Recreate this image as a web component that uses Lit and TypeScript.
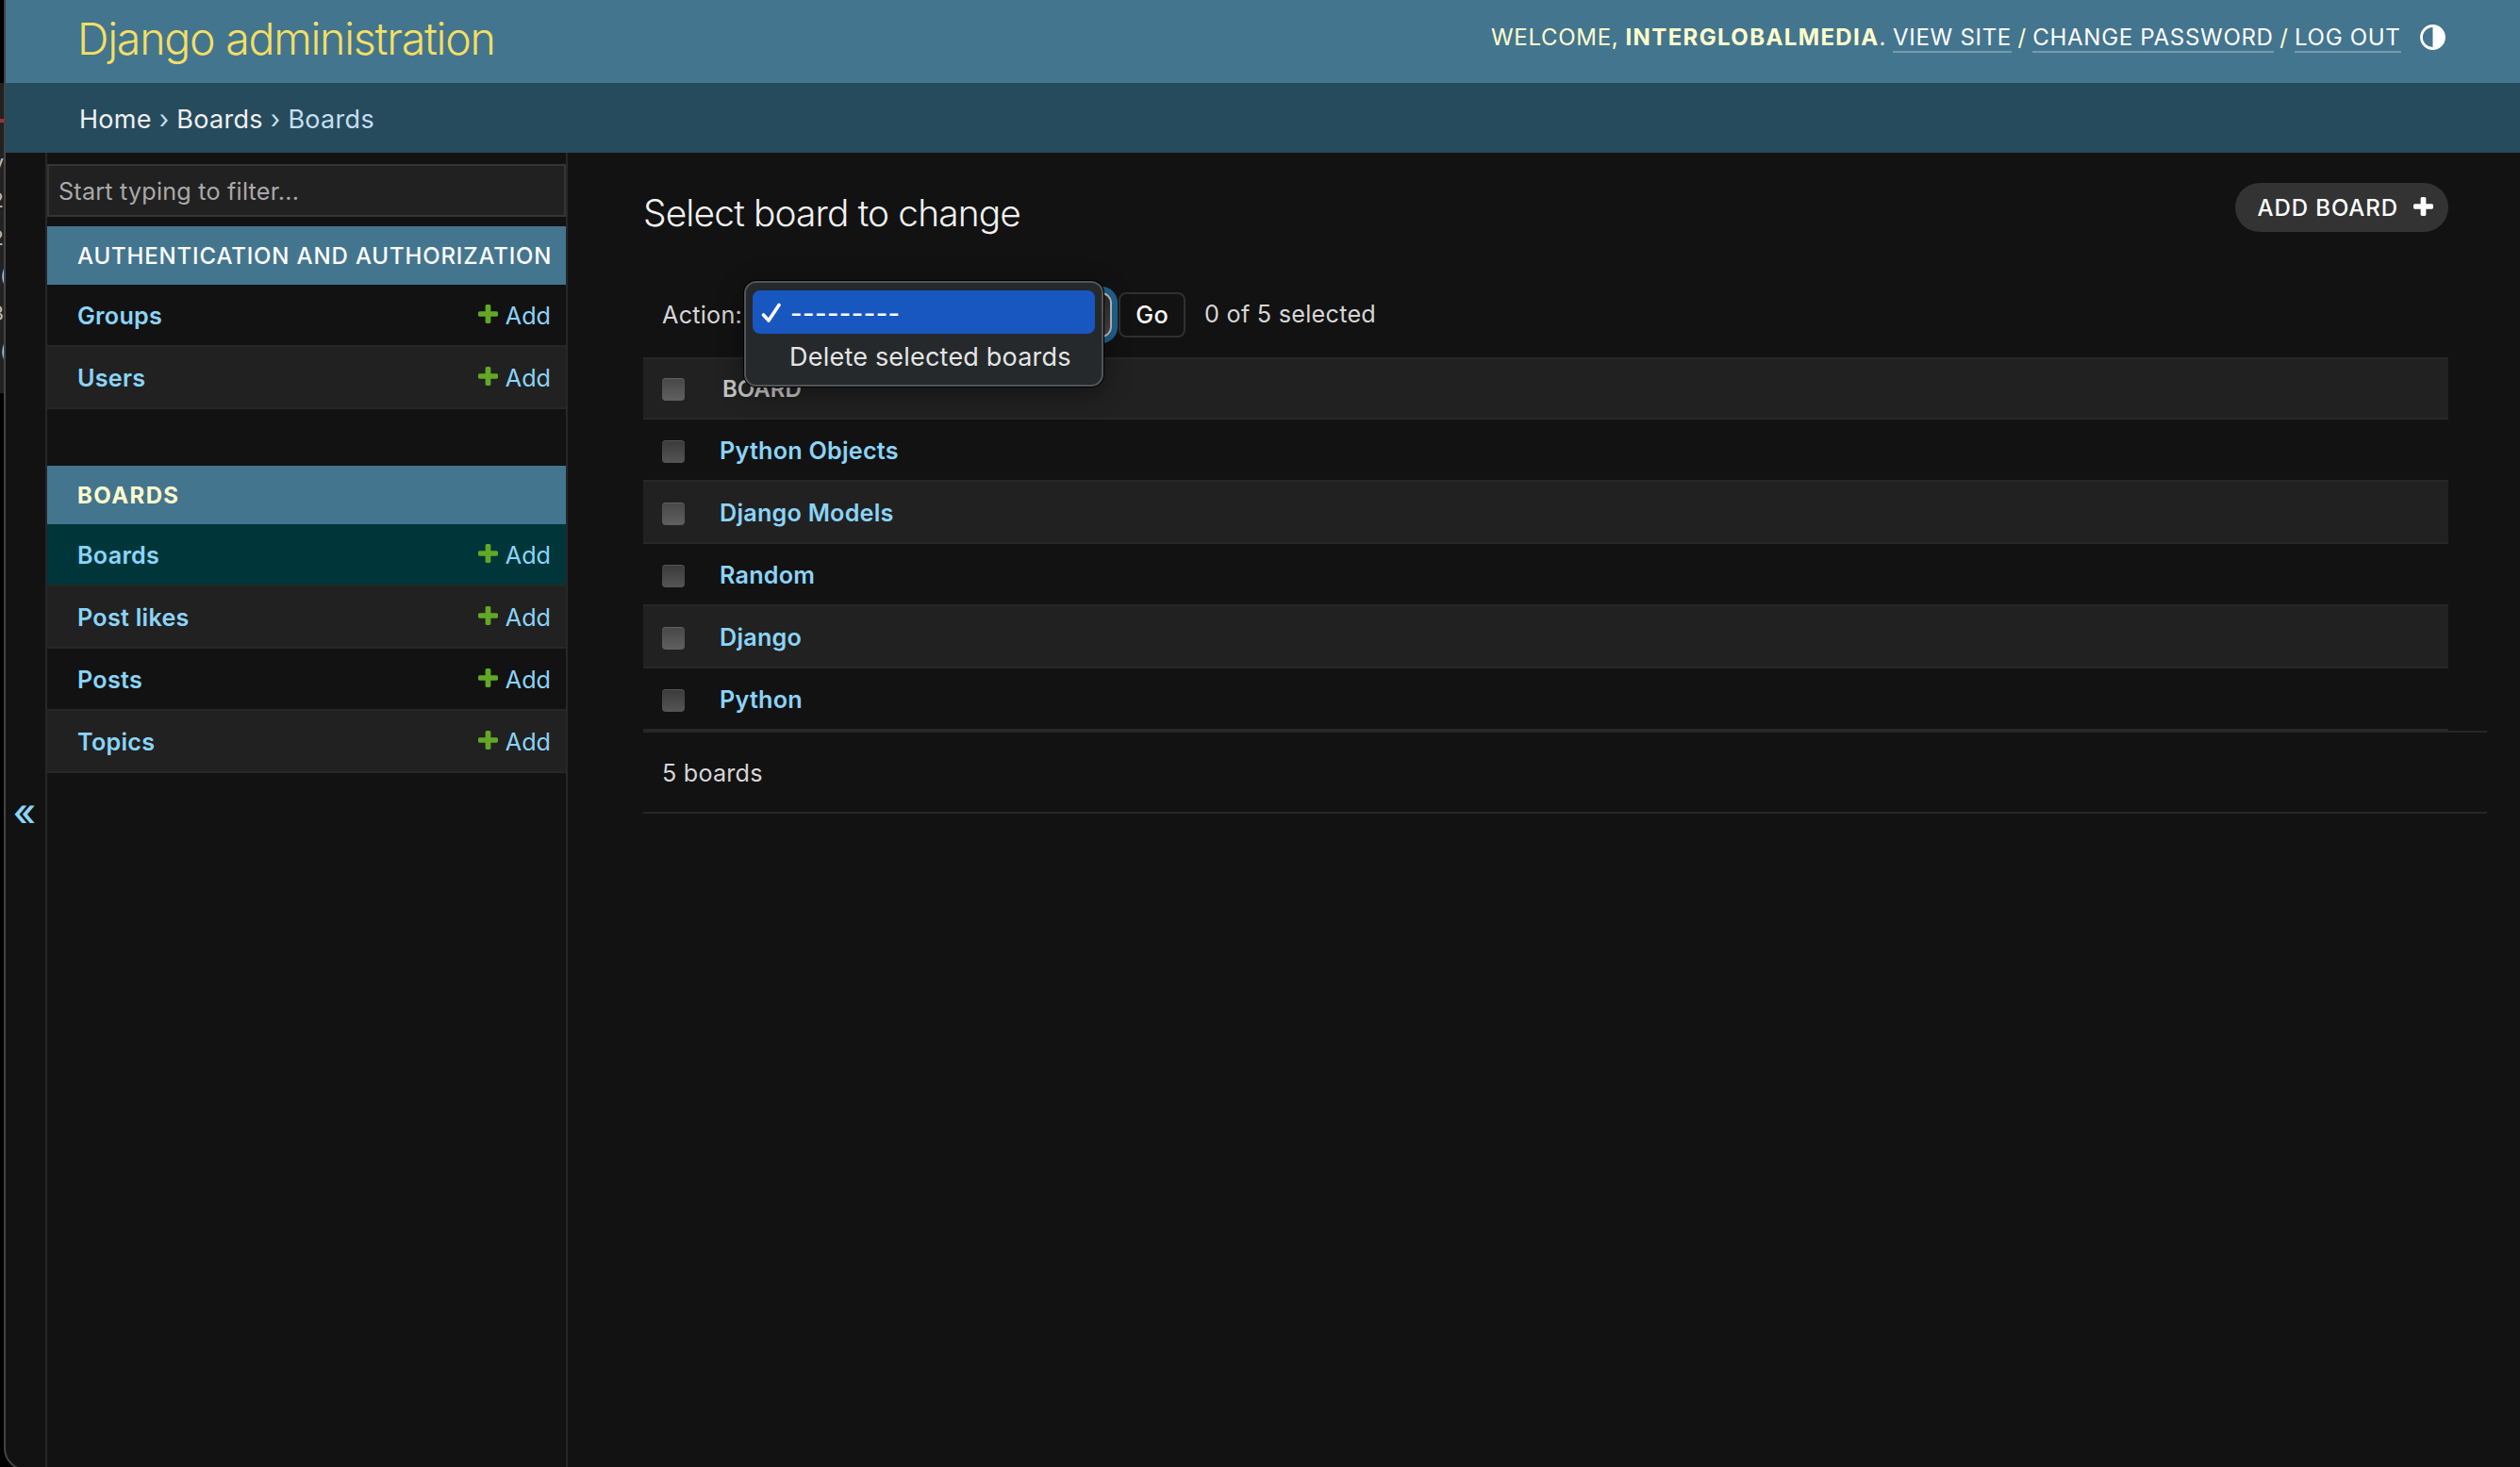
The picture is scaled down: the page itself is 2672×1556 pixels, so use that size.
import { LitElement, html, css, svg } from 'lit';
import { customElement, property } from 'lit/decorators.js'
import { classMap } from 'lit/directives/class-map.js';

interface Model {
  name: string;
  current?: boolean;
}

interface App {
  label: string;
  current?: boolean;
  models: Model[];
}

const APPS: App[] = [
  {
    label: 'Authentication and Authorization',
    models: [{ name: 'Groups' }, { name: 'Users' }],
  },
  {
    label: 'Boards',
    current: true,
    models: [{ name: 'Boards', current: true }, { name: 'Post likes' }, { name: 'Posts' }, { name: 'Topics' }],
  },
];

const BOARDS = ['Python Objects', 'Django Models', 'Random', 'Django', 'Python'];

const plus = svg`<path d="M1600 796v192q0 40-28 68t-68 28h-416v416q0 40-28 68t-68 28H800q-40 0-68-28t-28-68v-416H288q-40 0-68-28t-28-68V796q0-40 28-68t68-28h416V284q0-40 28-68t68-28h192q40 0 68 28t28 68v416h416q40 0 68 28t28 68z"/>`;

/**
 * Top bar with the site name and the user links.
 */
@customElement('admin-header')
export class AdminHeader extends LitElement {

  @property() user = '';

  static override styles = css`
    :host {
      display: flex;
      justify-content: space-between;
      box-sizing: border-box;
      height: 88px;
      padding: 0 79px 0 76px;
      background: #44758f;
      color: #ffc;
    }

    h1 {
      margin: 0;
      font-size: 46.5px;
      font-weight: 330;
      line-height: 82px;
      letter-spacing: -1.25px;
      color: #f4df62;
    }

    .tools {
      display: flex;
      font-size: 24px;
      line-height: 80px;
      letter-spacing: 0.7px;
      text-transform: uppercase;
      white-space: pre;
    }

    .tools strong {
      margin-left: 7px;
      font-weight: 700;
      letter-spacing: 1.37px;
    }

    .tools a {
      color: #fff;
      border-bottom: 2px solid rgba(255, 255, 255, 0.27);
    }

    .tools .first {
      margin-left: 7px;
    }

    .tools .sep {
      margin: 0 6.5px;
    }

    svg {
      width: 27px;
      height: 27px;
      margin: 26px 0 0 20.5px;
    }
  `;

  override render() {
    return html`
      <h1>Django administration</h1>
      <div class="tools">
        <span>Welcome,</span><strong>${this.user}</strong><span>.</span>
        <span class="first"><a>View site</a></span><span class="sep">/</span><span><a>Change password</a></span><span class="sep">/</span><span><a>Log out</a></span>
        <svg viewBox="0 0 27 27">
          <circle cx="13.5" cy="13.5" r="12" fill="none" stroke="#fff" stroke-width="2.8" />
          <path d="M13.5 1.5a12 12 0 0 1 0 24z" fill="#fff" />
        </svg>
      </div>`;
  }
}

/**
 * Left navigation: filter box and one block for each app.
 */
@customElement('admin-sidebar')
export class AdminSidebar extends LitElement {

  static override styles = css`
    :host {
      display: block;
      box-sizing: border-box;
      width: 554px;
      padding-top: 12px;
      border: solid #272727;
      border-width: 0 2px;
      font-size: 25.2px;
    }

    .filter {
      box-sizing: border-box;
      height: 56px;
      margin-bottom: 10px;
      padding: 0 10px;
      border: 2px solid #353535;
      background: #212121;
      color: #a9a9a9;
      line-height: 54px;
      letter-spacing: 0.2px;
    }

    .app {
      margin-bottom: 60px;
    }

    .caption {
      height: 62px;
      padding-left: 32px;
      background: #44758f;
      color: #fff;
      font-size: 24px;
      font-weight: 470;
      line-height: 64px;
      letter-spacing: 0.85px;
      text-transform: uppercase;
      white-space: nowrap;
    }

    .caption.current {
      color: #ffc;
      font-weight: 700;
      letter-spacing: 1.4px;
    }

    .model {
      display: flex;
      align-items: center;
      box-sizing: border-box;
      height: 66px;
      padding: 0 16px 0 32px;
      border-bottom: 2px solid #272727;
      color: #8ad4f8;
    }

    .model:nth-child(odd) {
      background: #212121;
    }

    .model.current {
      background: #00363a;
    }

    .model span {
      padding-top: 2px;
    }

    .name {
      flex: 1;
      font-weight: 560;
      letter-spacing: 0.25px;
    }

    .add {
      font-weight: 430;
    }

    .model svg {
      width: 21px;
      height: 20px;
      margin: 0 8px 2px 0;
      fill: #62a826;
    }
  `;

  override render() {
    return html`
      <div class="filter">Start typing to filter...</div>
      ${APPS.map(app => html`
        <div class="app">
          <div class=${classMap({ caption: true, current: !!app.current })}>${app.label}</div>
          ${app.models.map(m => html`
            <div class=${classMap({ model: true, current: !!m.current })}>
              <span class="name">${m.name}</span>
              <svg viewBox="192 188 1408 1408" preserveAspectRatio="none">${plus}</svg>
              <span class="add">Add</span>
            </div>`)}
        </div>`)}`;
  }
}

/**
 * Change list with the action bar, the result table and the paginator.
 */
@customElement('change-list')
export class ChangeList extends LitElement {

  static override styles = css`
    :host {
      display: block;
      flex: 1;
      padding: 32px 35px 0 80px;
      font-size: 25.2px;
      color: #d6d6d6;
    }

    .top {
      display: flex;
      justify-content: space-between;
      align-items: flex-start;
      height: 64px;
      margin-right: 41px;
    }

    h2 {
      margin: 0;
      color: #f2f2f2;
      font-size: 38.8px;
      font-weight: 330;
      line-height: 64px;
      letter-spacing: -0.82px;
    }

    .addlink {
      display: flex;
      align-items: center;
      box-sizing: border-box;
      height: 52px;
      padding: 0 16px 0 24px;
      border-radius: 26px;
      background: #333;
      color: #fff;
      font-size: 24px;
      font-weight: 500;
      letter-spacing: 0.91px;
    }

    .addlink svg {
      width: 21px;
      height: 20px;
      margin: 0 0 2px 16px;
      fill: #fff;
    }

    .actions {
      display: flex;
      align-items: center;
      height: 48px;
      margin: 52px 0 21px;
      padding-left: 20px;
      letter-spacing: 0.25px;
    }

    .picker {
      position: relative;
      width: 385px;
      height: 48px;
      margin: 0 7px;
    }

    .select {
      box-sizing: border-box;
      height: 48px;
      border: 2px solid #c4c4c4;
      border-radius: 11px;
      background: linear-gradient(#2c2c2c, #4a4a4a);
      box-shadow: 0 0 0 6px #1f6491;
    }

    .menu {
      position: absolute;
      z-index: 1;
      left: -5px;
      top: -12px;
      box-sizing: border-box;
      width: 381px;
      height: 112px;
      padding: 8px 7px;
      border: 2px solid #515557;
      border-radius: 13px;
      background: #25292b;
      box-shadow: 0 0 0 1px #000, 0 6px 28px rgba(0, 0, 0, 0.45);
      color: #e4e5e5;
      font-size: 27px;
      letter-spacing: 0.2px;
      white-space: nowrap;
    }

    .option {
      display: flex;
      align-items: center;
      height: 46px;
      margin-bottom: 1px;
      padding-left: 39px;
      border-radius: 8px;
    }

    .option.selected {
      padding-left: 9px;
      background: #1857c0;
      color: #fff;
      font-weight: 500;
      letter-spacing: 0.45px;
    }

    .option span {
      padding-top: 2px;
    }

    .option svg {
      width: 22px;
      height: 22px;
      margin: 2px 9px 0 0;
      fill: none;
      stroke: #fff;
      stroke-width: 3.6;
      stroke-linecap: round;
      stroke-linejoin: round;
    }

    .go {
      box-sizing: border-box;
      width: 71px;
      height: 48px;
      margin-right: 20px;
      border: 2px solid #303030;
      border-radius: 8px;
      color: #fff;
      font-weight: 450;
      line-height: 44px;
      text-align: center;
    }

    .counter {
      padding-bottom: 2px;
    }

    .results {
      margin-right: 41px;
    }

    .row {
      display: flex;
      align-items: center;
      box-sizing: border-box;
      height: 66px;
      padding-left: 20px;
      border-bottom: 2px solid #272727;
    }

    .row:nth-child(odd) {
      background: #212121;
    }

    .row.head {
      border-top: 2px solid #272727;
      color: #c8c8c8;
      font-size: 24px;
      font-weight: 600;
      text-transform: uppercase;
    }

    .box {
      width: 24px;
      height: 24px;
      margin: 3px 37px 0 0;
      border-radius: 4px;
      background: linear-gradient(#3a3a3a, #555);
      box-shadow: inset 0 1px 0 rgba(255, 255, 255, 0.14);
    }

    .row:nth-child(odd) .box {
      background: linear-gradient(#474747, #606060);
    }

    .head .box {
      margin: 2px 40px 0 0;
    }

    .row a {
      padding-top: 2px;
      color: #8ad4f8;
      font-weight: 570;
      letter-spacing: 0.22px;
    }

    .paginator {
      height: 84px;
      padding-left: 20px;
      border: solid #272727;
      border-width: 2px 0;
      line-height: 86px;
      letter-spacing: 0.2px;
    }
  `;

  override render() {
    return html`
      <div class="top">
        <h2>Select board to change</h2>
        <a class="addlink">ADD BOARD<svg viewBox="192 188 1408 1408" preserveAspectRatio="none">${plus}</svg></a>
      </div>
      <div class="actions">
        <span>Action:</span>
        <div class="picker">
          <div class="select"></div>
          <div class="menu">
            <div class="option selected">
              <svg viewBox="0 0 22 22"><path d="M2.5 13l5.5 6L19 2.5" /></svg>
              <span>---------</span>
            </div>
            <div class="option">Delete selected boards</div>
          </div>
        </div>
        <div class="go">Go</div>
        <span class="counter">0 of 5 selected</span>
      </div>
      <div class="results">
        <div class="row head"><span class="box"></span>Board</div>
        ${BOARDS.map(b => html`<div class="row"><span class="box"></span><a>${b}</a></div>`)}
      </div>
      <div class="paginator">5 boards</div>`;
  }
}

@customElement('app-root')
export class AppRoot extends LitElement {

  static override styles = css`
    :host {
      display: flex;
      width: 2672px;
      height: 1556px;
      overflow: hidden;
      background: #000;
      font-family: Inter, "Liberation Sans", sans-serif;
    }

    /* Sliver of the window behind */
    .behind {
      box-sizing: border-box;
      width: 4px;
      height: 329px;
      margin-top: 88px;
      padding-top: 38px;
      overflow: hidden;
      background: #222;
      color: #bbb;
      font-size: 22px;
    }

    .mark {
      height: 4px;
      margin-bottom: 22px;
      background: #a03038;
    }

    .line {
      display: flex;
      height: 40px;
      line-height: 40px;
    }

    .line.end {
      justify-content: flex-end;
    }

    .window {
      display: flex;
      flex-direction: column;
      flex: 1;
      height: 1558px;
      border: solid #444;
      border-width: 0 0 2px 2px;
      border-bottom-left-radius: 24px;
      overflow: hidden;
      background: #121212;
    }

    .crumbs {
      box-sizing: border-box;
      height: 74px;
      padding: 2px 0 0 78px;
      background: #264b5d;
      color: #c4dff0;
      font-size: 27px;
      line-height: 74px;
      letter-spacing: 0.3px;
    }

    .crumbs a {
      color: #f0f0f0;
    }

    .content {
      display: flex;
      flex: 1;
    }

    .toggle {
      display: flex;
      align-items: center;
      justify-content: center;
      box-sizing: border-box;
      width: 42px;
      padding: 2px 2px 0 0;
      color: #8ad4f8;
      font-size: 40px;
      font-weight: 500;
    }
  `;

  override render() {
    return html`
      <div class="behind">
        <div class="mark"></div>
        ${['y', '2', '2', '(', '3', '('].map(c => html`<div class=${classMap({ line: true, end: c !== '(' })}>${c}</div>`)}
      </div>
      <div class="window">
        <admin-header user="interglobalmedia"></admin-header>
        <div class="crumbs"><a>Home</a> › <a>Boards</a> › Boards</div>
        <div class="content">
          <div class="toggle">«</div>
          <admin-sidebar></admin-sidebar>
          <change-list></change-list>
        </div>
      </div>`;
  }
}
